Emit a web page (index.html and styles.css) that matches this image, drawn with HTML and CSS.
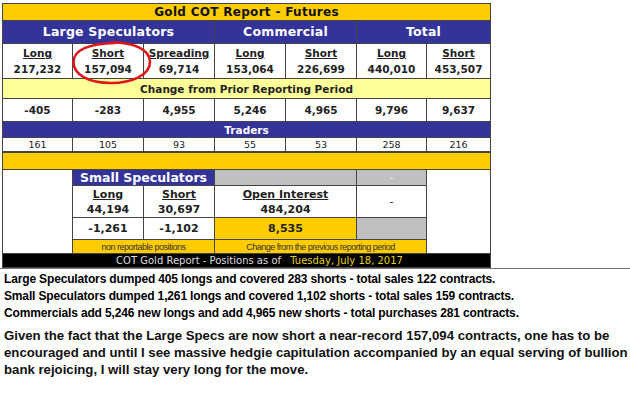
FILE: index.html
```html
<!DOCTYPE html>
<html>
<head>
<meta charset="utf-8">
<link rel="stylesheet" href="styles.css">
</head>
<body>
<div class="report">
  <table class="cot">
    <colgroup>
      <col class="c1"><col class="c2"><col class="c3"><col class="c4"><col class="c5"><col class="c6"><col class="c7">
    </colgroup>
    <tr class="r-title"><td colspan="7">Gold COT Report - Futures</td></tr>
    <tr class="r-head">
      <td colspan="3">Large Speculators</td>
      <td colspan="2">Commercial</td>
      <td colspan="2">Total</td>
    </tr>
    <tr class="r-pos">
      <td><u>Long</u><br>217,232</td>
      <td><u>Short</u><br>157,094</td>
      <td><u>Spreading</u><br>69,714</td>
      <td><u>Long</u><br>153,064</td>
      <td><u>Short</u><br>226,699</td>
      <td><u>Long</u><br>440,010</td>
      <td><u>Short</u><br>453,507</td>
    </tr>
    <tr class="r-chg-title"><td colspan="7">Change from Prior Reporting Period</td></tr>
    <tr class="r-chg">
      <td>-405</td><td>-283</td><td>4,955</td><td>5,246</td><td>4,965</td><td>9,796</td><td>9,637</td>
    </tr>
    <tr class="r-traders-title"><td colspan="7">Traders</td></tr>
    <tr class="r-traders">
      <td>161</td><td>105</td><td>93</td><td>55</td><td>53</td><td>258</td><td>216</td>
    </tr>
    <tr class="r-gap"><td colspan="7"></td></tr>
    <tr class="r-small-head">
      <td rowspan="4" class="blank"></td>
      <td colspan="2" class="small-title">Small Speculators</td>
      <td colspan="2" class="grey"></td>
      <td class="grey dash">-</td>
      <td rowspan="4" class="void"></td>
    </tr>
    <tr class="r-small">
      <td><u>Long</u><br>44,194</td>
      <td><u>Short</u><br>30,697</td>
      <td colspan="2"><u>Open Interest</u><br>484,204</td>
      <td class="plain">-</td>
    </tr>
    <tr class="r-small-chg">
      <td>-1,261</td>
      <td>-1,102</td>
      <td colspan="2" class="gold">8,535</td>
      <td class="grey"></td>
    </tr>
    <tr class="r-label">
      <td colspan="2">non reportable positions</td>
      <td colspan="3">Change from the previous reporting period</td>
    </tr>
    <tr class="r-foot">
      <td colspan="7">COT Gold Report - Positions as of <span class="date">Tuesday, July 18, 2017</span></td>
    </tr>
  </table>
  <svg class="circle" width="82" height="46" viewBox="0 0 82 46">
    <path d="M40 2.5 C61 2 79 9 79 22 C79 35 61 43 40 43 C18 43 2.5 35 2.5 22 C2.5 10 18 3.5 44 3" fill="none" stroke="#e0161b" stroke-width="2.6"/>
  </svg>
</div>
<div class="rule"></div>
<div class="summary">
  <p>Large Speculators dumped 405 longs and covered 283 shorts - total sales 122 contracts.</p>
  <p>Small Speculators dumped 1,261 longs and covered 1,102 shorts - total sales 159 contracts.</p>
  <p>Commercials add 5,246 new longs and add 4,965 new shorts - total purchases 281 contracts.</p>
</div>
<p class="comment">Given the fact that the Large Specs are now short a near-record 157,094 contracts, one has to be encouraged and until I see massive hedgie capitulation accompanied by an equal serving of bullion bank rejoicing, I will stay very long for the move.</p>
</body>
</html>
```

FILE: styles.css
```css
html, body {
  margin: 0;
  padding: 0;
  background: #fff;
}
body {
  width: 630px;
  height: 405px;
  overflow: hidden;
  font-family: "DejaVu Sans", Verdana, sans-serif;
  color: #222;
}
.report {
  position: relative;
  width: 490px;
  margin: 3px 0 0 2px;
}
.cot {
  border-collapse: collapse;
  table-layout: fixed;
  width: 489px;
  border: 1px solid #444;
}
.c1 { width: 70px; }
.c2, .c3, .c4, .c5 { width: 71px; }
.c6 { width: 70px; }
.c7 { width: 64px; }
.cot td {
  border: 1px solid #444;
  padding: 0;
  text-align: center;
  font-size: 10px;
  line-height: 12px;
  overflow: hidden;
  white-space: nowrap;
}
.r-title td {
  height: 16px;
  background: #ffcc00;
  font-weight: bold;
  font-size: 12px;
  color: #111;
  letter-spacing: 0.3px;
}
.r-head td {
  height: 22px;
  background: #333399;
  color: #fff;
  font-weight: bold;
  font-size: 12.5px;
  letter-spacing: 0.2px;
}
.r-pos td {
  height: 34px;
  font-weight: bold;
  font-size: 10.5px;
  line-height: 16px;
}
.r-chg-title td {
  height: 19px;
  background: #ffff99;
  font-weight: bold;
  font-size: 10.5px;
}
.r-chg td {
  height: 22px;
  font-weight: bold;
  font-size: 10.5px;
}
.r-traders-title td {
  height: 15px;
  background: #333399;
  color: #fff;
  font-weight: bold;
  font-size: 10.5px;
}
.r-traders td {
  height: 13px;
  font-size: 9.5px;
  border-bottom-width: 2px;
}
.r-gap td {
  height: 16px;
  background: #ffcc00;
}
.r-small-head td {
  height: 15px;
}
.small-title {
  background: #333399;
  color: #fff;
  font-weight: bold;
  font-size: 12.5px !important;
}
.grey {
  background: #c0c0c0;
}
.dash {
  color: #eee;
  font-size: 9px;
}
.blank {
  background: #fff;
}
.cot td.void {
  border: none;
  border-left: 1px solid #444;
  background: #fff;
}
.r-small td {
  height: 31px;
  font-weight: bold;
  font-size: 11px;
  line-height: 15px;
}
.r-small td.plain {
  font-weight: normal;
}
.r-small-chg td {
  height: 21px;
  font-weight: bold;
  font-size: 11px;
}
.gold {
  background: #ffcc00;
}
.r-label td {
  height: 13px;
  background: #ffcc00;
  font-size: 9px;
  letter-spacing: -0.5px;
  color: #333;
  font-family: "Liberation Sans", Arial, sans-serif;
}
.r-foot td {
  height: 13px;
  background: #000;
  color: #ddd;
  font-size: 10px;
  padding-left: 26px;
}
.date {
  color: #e6d21a;
  margin-left: 6px;
}
.circle {
  position: absolute;
  left: 69px;
  top: 37px;
}
.rule {
  height: 1px;
  background: #777;
}
.summary {
  margin: 2px 0 0 4px;
  font-family: "Liberation Sans", Arial, sans-serif;
  font-weight: bold;
  font-size: 12px;
  color: #000;
  letter-spacing: -0.15px;
}
.summary p {
  margin: 0;
  line-height: 17px;
}
.comment {
  margin: 5px 0 0 4px;
  width: 624px;
  font-family: "Liberation Sans", Arial, sans-serif;
  font-weight: bold;
  font-size: 13.2px;
  line-height: 17px;
  color: #111;
}
```
